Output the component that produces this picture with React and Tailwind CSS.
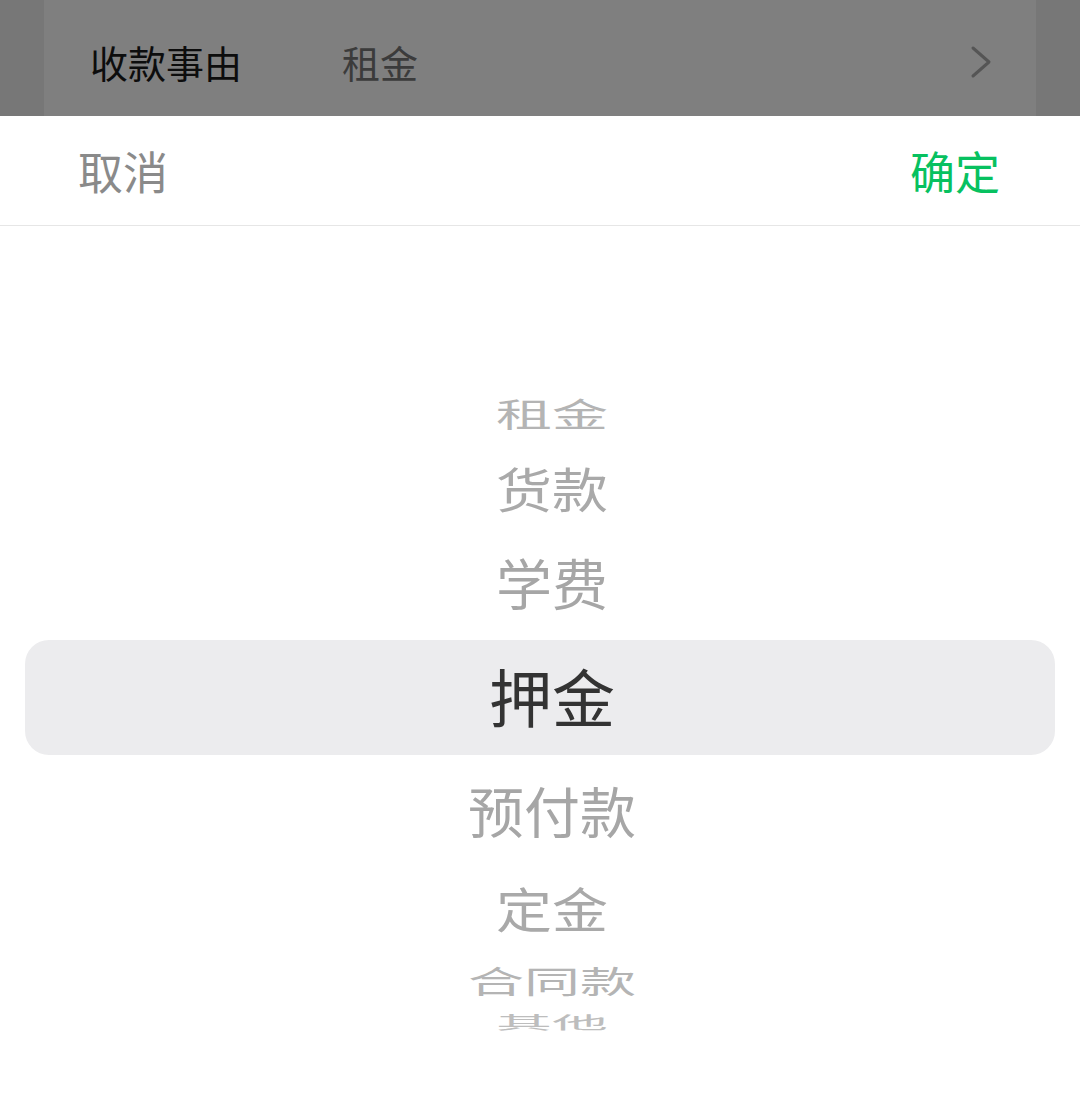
const FONT = { fontFamily: '"Noto Sans CJK SC", "Noto Sans", sans-serif' };

const ITEMS = [
  { label: "租金", h: "h-[74px]", scale: "scale-y-[0.58]", color: "text-[#b4b4b4]" },
  { label: "货款", h: "h-[74px]", scale: "scale-y-[0.86]", color: "text-[#a9a9a9]" },
  { label: "学费", h: "h-[116px]", scale: "scale-y-[0.97]", color: "text-[#a6a6a6]" },
  { label: "押金", selected: true },
  { label: "预付款", h: "h-[110px]", scale: "scale-y-[0.97]", color: "text-[#a6a6a6]" },
  { label: "定金", h: "h-[84px]", scale: "scale-y-[0.86]", color: "text-[#a9a9a9]" },
  { label: "合同款", h: "h-[62px]", scale: "scale-y-[0.55]", color: "text-[#b4b4b4]" },
  { label: "其他", h: "h-[22px]", scale: "scale-y-[0.3]", color: "text-[#bdbdbd]" },
];

function Chevron() {
  return (
    <svg width="22" height="34" viewBox="0 0 22 34" fill="none">
      <path d="M3 3 L19 17 L3 31" stroke="#555" strokeWidth="3" strokeLinecap="round" strokeLinejoin="round" />
    </svg>
  );
}

export default function App() {
  return (
    <div className="flex h-[1120px] w-[1080px] flex-col overflow-hidden bg-white" style={FONT}>
      {/* dimmed form behind the sheet */}
      <div className="flex h-[116px] bg-[#777777]">
        <div className="mx-[44px] flex flex-1 items-center bg-[#7f7f7f] pl-[46px] pr-[44px] pt-[8px]">
          <span className="w-[252px] text-[38px] leading-none text-[#0d0d0d]">收款事由</span>
          <span className="flex-1 text-[38px] leading-none text-[#3b3b3b]">租金</span>
          <Chevron />
        </div>
      </div>

      {/* sheet header */}
      <div className="flex h-[110px] items-center justify-between border-b border-[#e6e6e6] pl-[78px] pr-[80px]">
        <button className="text-[45px] leading-none text-[#8a8a8a]">取消</button>
        <button className="text-[45px] leading-none text-[#07c160]">确定</button>
      </div>

      {/* wheel picker */}
      <div className="flex flex-1 flex-col">
        <div className="h-[150px]" />
        {ITEMS.map((it) =>
          it.selected ? (
            <div key={it.label} className="mx-[25px] flex h-[115px] items-center justify-center rounded-[24px] bg-[#ececee] pl-[24px] pb-[6px]">
              <span className="text-[63px] leading-none text-[#333333]">{it.label}</span>
            </div>
          ) : (
            <div key={it.label} className={`flex ${it.h} items-center justify-center overflow-hidden pl-[24px]`}>
              <span className={`${it.scale} ${it.color} text-[56px] leading-none`}>{it.label}</span>
            </div>
          )
        )}
      </div>
    </div>
  );
}
